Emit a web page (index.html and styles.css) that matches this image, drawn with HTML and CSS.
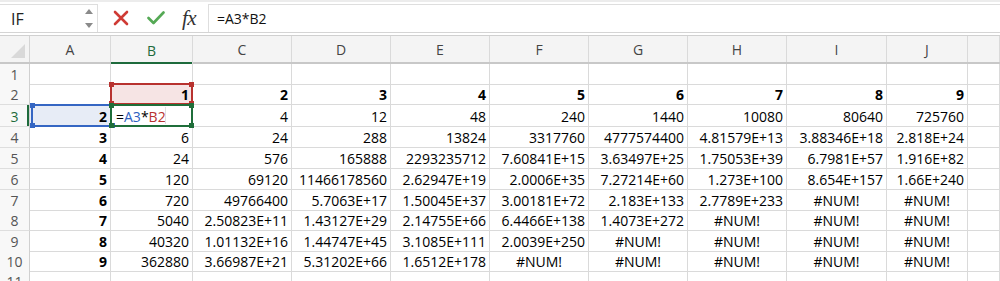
FILE: index.html
```html
<!DOCTYPE html>
<html>
<head>
<meta charset="utf-8">
<link rel="stylesheet" href="styles.css">
</head>
<body>
<div class="fbar">
  <div class="namebox">
    <span class="name">IF</span>
    <svg class="spin" width="10" height="22" viewBox="0 0 10 22"><path d="M1 6 L5 1 L9 6 Z" fill="#8a8a8a"/><path d="M1 15 L9 15 L5 20 Z" fill="#8a8a8a"/></svg>
  </div>
  <div class="tools">
    <svg width="16" height="16" viewBox="0 0 16 16"><path d="M2 2 L14 14 M14 2 L2 14" stroke="#cf3b35" stroke-width="2.6" stroke-linecap="round"/></svg>
    <svg width="18" height="16" viewBox="0 0 18 16"><path d="M1.5 8 L6.5 13 L16.5 2.5" fill="none" stroke="#55a955" stroke-width="2.6" stroke-linecap="round" stroke-linejoin="round"/></svg>
    <span class="fx">fx</span>
  </div>
  <div class="input">=A3*B2</div>
</div>
<div class="sep"></div>
<div class="sheet">
  <div class="row hdr">
    <div class="corner"><svg width="16" height="16" viewBox="0 0 16 16"><path d="M1 15 L15 1 L15 15 Z" fill="#d9d9d9"/></svg></div>
    <div class="ch">A</div><div class="ch sel">B</div><div class="ch">C</div><div class="ch">D</div><div class="ch">E</div><div class="ch">F</div><div class="ch">G</div><div class="ch">H</div><div class="ch">I</div><div class="ch">J</div><div class="ch"></div>
  </div>
  <div class="row r20">
    <div class="rh">1</div><div class="c"></div><div class="c"></div><div class="c"></div><div class="c"></div><div class="c"></div><div class="c"></div><div class="c"></div><div class="c"></div><div class="c"></div><div class="c"></div><div class="c"></div>
  </div>
  <div class="row r21">
    <div class="rh">2</div><div class="c"></div><div class="c b red">1</div><div class="c b">2</div><div class="c b">3</div><div class="c b">4</div><div class="c b">5</div><div class="c b">6</div><div class="c b">7</div><div class="c b">8</div><div class="c b">9</div><div class="c"></div>
  </div>
  <div class="row r22">
    <div class="rh rsel">3</div><div class="c b blue">2</div><div class="c edit"><span>=</span><span class="fb">A3</span><span>*</span><span class="fr">B2</span><i class="caret"></i></div><div class="c">4</div><div class="c">12</div><div class="c">48</div><div class="c">240</div><div class="c">1440</div><div class="c">10080</div><div class="c">80640</div><div class="c">725760</div><div class="c"></div>
  </div>
  <div class="row r21">
    <div class="rh">4</div><div class="c b">3</div><div class="c">6</div><div class="c">24</div><div class="c">288</div><div class="c">13824</div><div class="c">3317760</div><div class="c">4777574400</div><div class="c">4.81579E+13</div><div class="c">3.88346E+18</div><div class="c">2.818E+24</div><div class="c"></div>
  </div>
  <div class="row r21">
    <div class="rh">5</div><div class="c b">4</div><div class="c">24</div><div class="c">576</div><div class="c">165888</div><div class="c">2293235712</div><div class="c">7.60841E+15</div><div class="c">3.63497E+25</div><div class="c">1.75053E+39</div><div class="c">6.7981E+57</div><div class="c">1.916E+82</div><div class="c"></div>
  </div>
  <div class="row r21">
    <div class="rh">6</div><div class="c b">5</div><div class="c">120</div><div class="c">69120</div><div class="c">11466178560</div><div class="c">2.62947E+19</div><div class="c">2.0006E+35</div><div class="c">7.27214E+60</div><div class="c">1.273E+100</div><div class="c">8.654E+157</div><div class="c">1.66E+240</div><div class="c"></div>
  </div>
  <div class="row r20">
    <div class="rh">7</div><div class="c b">6</div><div class="c">720</div><div class="c">49766400</div><div class="c">5.7063E+17</div><div class="c">1.50045E+37</div><div class="c">3.00181E+72</div><div class="c">2.183E+133</div><div class="c">2.7789E+233</div><div class="c err">#NUM!</div><div class="c err">#NUM!</div><div class="c"></div>
  </div>
  <div class="row r21">
    <div class="rh">8</div><div class="c b">7</div><div class="c">5040</div><div class="c">2.50823E+11</div><div class="c">1.43127E+29</div><div class="c">2.14755E+66</div><div class="c">6.4466E+138</div><div class="c">1.4073E+272</div><div class="c err">#NUM!</div><div class="c err">#NUM!</div><div class="c err">#NUM!</div><div class="c"></div>
  </div>
  <div class="row r20">
    <div class="rh">9</div><div class="c b">8</div><div class="c">40320</div><div class="c">1.01132E+16</div><div class="c">1.44747E+45</div><div class="c">3.1085E+111</div><div class="c">2.0039E+250</div><div class="c err">#NUM!</div><div class="c err">#NUM!</div><div class="c err">#NUM!</div><div class="c err">#NUM!</div><div class="c"></div>
  </div>
  <div class="row r20">
    <div class="rh">10</div><div class="c b">9</div><div class="c">362880</div><div class="c">3.66987E+21</div><div class="c">5.31202E+66</div><div class="c">1.6512E+178</div><div class="c err">#NUM!</div><div class="c err">#NUM!</div><div class="c err">#NUM!</div><div class="c err">#NUM!</div><div class="c err">#NUM!</div><div class="c"></div>
  </div>
  <div class="row r20">
    <div class="rh">11</div><div class="c"></div><div class="c"></div><div class="c"></div><div class="c"></div><div class="c"></div><div class="c"></div><div class="c"></div><div class="c"></div><div class="c"></div><div class="c"></div><div class="c"></div>
  </div>
  <div class="box box-blue"><i class="h tl"></i><i class="h bl"></i><i class="h br"></i></div>
  <div class="box box-red"><i class="h tl"></i><i class="h tr"></i><i class="h bl"></i><i class="h br"></i></div>
  <div class="box box-green"><i class="h tl"></i><i class="h tr"></i><i class="h bl"></i><i class="h br"></i></div>
</div>
</body>
</html>
```
FILE: styles.css
```css
* { box-sizing: border-box; }
html, body { margin: 0; padding: 0; background: #fff; }
body { width: 1000px; height: 281px; overflow: hidden; font-family: "Open Sans", "Noto Sans", sans-serif; color: #000; }

.fbar {
  height: 33px;
  border-top: 2px solid #ececec;
  border-bottom: 1px solid #d4d4d4;
  display: flex;
  align-items: stretch;
  padding-top: 2px;
}
.namebox {
  width: 98px;
  border: 1px solid #dedede;
  border-left: none;
  border-bottom: none;
  display: flex;
  align-items: center;
  justify-content: space-between;
  padding: 0 3px 0 11px;
}
.name { font-size: 16px; color: #222; }
.tools {
  width: 110px;
  display: flex;
  align-items: center;
  padding-left: 15px;
}
.tools svg:nth-child(1) { margin-right: 18px; }
.tools svg:nth-child(2) { margin-right: 17px; }
.fx { font-family: "Liberation Serif", serif; font-style: italic; font-size: 21px; color: #333; letter-spacing: -0.5px; line-height: 1; }
.input {
  flex: 1;
  border: 1px solid #dedede;
  border-right: none;
  border-bottom: none;
  font-size: 14px;
  color: #111;
  padding-left: 8px;
  display: flex;
  align-items: center;
}
.sep { height: 3px; border-bottom: 1px solid #d0d0d0; }

.sheet { position: relative; }
.row {
  display: grid;
  grid-template-columns: 30px 81px 82px 99px 99px 99px 99px 99px 99px 100px 81px 1fr;
}
.r20 { height: 20px; }
.r21 { height: 21px; }
.r22 { height: 22px; }
.hdr { height: 28px; background: #f4f4f4; border-bottom: 2px solid #c8c8c8; }
.corner { border-right: 1px solid #d4d4d4; display: flex; align-items: flex-end; justify-content: flex-end; padding: 0 3px 3px 0; }
.ch {
  border-right: 1px solid #dadada;
  display: flex; align-items: center; justify-content: center;
  font-size: 14px; color: #444;
}
.ch.sel { color: #1e6b3c; box-shadow: inset 0 -2px 0 #1e6b3c; margin-bottom: -2px; }
.rh {
  background: #f8f8f8;
  border-right: 1px solid #d0d0d0;
  border-bottom: 1px solid #dedede;
  display: flex; align-items: center; justify-content: center;
  font-size: 14px; color: #555;
  padding-top: 1px;
}
.rh.rsel { color: #1e6b3c; box-shadow: inset -2px 0 0 #1e6b3c; }
.c {
  border-right: 1px solid #dadada;
  border-bottom: 1px solid #dadada;
  display: flex; align-items: center; justify-content: flex-end;
  padding: 1px 3px 0 0;
  font-size: 14px;
  white-space: nowrap;
  overflow: hidden;
}
.c.b { font-weight: bold; }
.c.err { justify-content: center; padding-right: 0; }
.c.red { background: #f6e4e4; }
.c.blue { background: #e7ecf6; }
.c.edit { justify-content: flex-start; padding-left: 5px; position: relative; }
.fb { color: #2f5fc0; }
.fr { color: #b8322f; }
.caret { position: absolute; left: 54px; top: 2px; bottom: 2px; width: 1px; background: #e0e0e0; }

.box { position: absolute; border: 2px solid; pointer-events: none; }
.box-red { left: 110px; top: 47px; width: 83px; height: 22px; border-color: #b8322f; }
.box-blue { left: 31px; top: 68px; width: 81px; height: 23px; border-color: #3566c3; border-right: none; }
.box-green { left: 110px; top: 68px; width: 83px; height: 23px; border-color: #1f6e3a; }
.h { position: absolute; width: 5px; height: 5px; }
.box-red .h { background: #b8322f; }
.box-blue .h { background: #3566c3; }
.box-green .h { background: #1f6e3a; }
.tl { left: -3px; top: -3px; }
.tr { right: -3px; top: -3px; }
.bl { left: -3px; bottom: -3px; }
.br { right: -3px; bottom: -3px; }
```
